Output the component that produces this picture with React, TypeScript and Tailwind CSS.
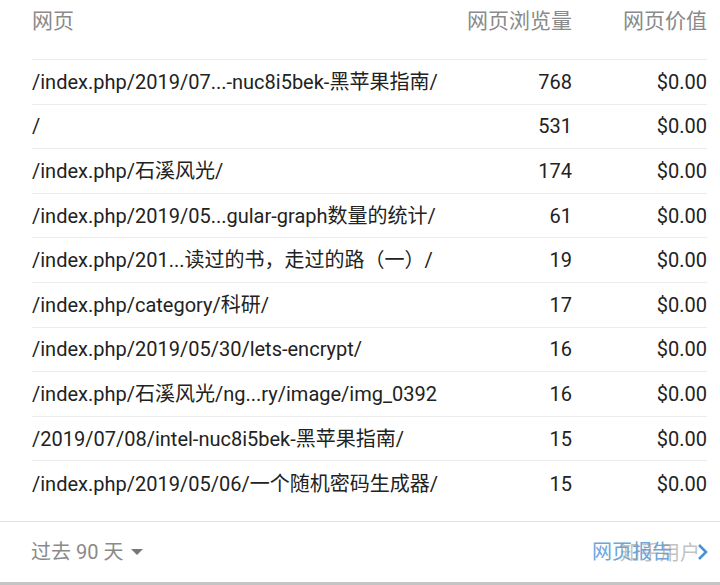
import React from "react";

type Row = {
  page: string;
  views: number;
  value: string;
};

const rows: Row[] = [
  { page: "/index.php/2019/07...-nuc8i5bek-黑苹果指南/", views: 768, value: "$0.00" },
  { page: "/", views: 531, value: "$0.00" },
  { page: "/index.php/石溪风光/", views: 174, value: "$0.00" },
  { page: "/index.php/2019/05...gular-graph数量的统计/", views: 61, value: "$0.00" },
  { page: "/index.php/201...读过的书，走过的路（一）/", views: 19, value: "$0.00" },
  { page: "/index.php/category/科研/", views: 17, value: "$0.00" },
  { page: "/index.php/2019/05/30/lets-encrypt/", views: 16, value: "$0.00" },
  { page: "/index.php/石溪风光/ng...ry/image/img_0392", views: 16, value: "$0.00" },
  { page: "/2019/07/08/intel-nuc8i5bek-黑苹果指南/", views: 15, value: "$0.00" },
  { page: "/index.php/2019/05/06/一个随机密码生成器/", views: 15, value: "$0.00" },
];

const font = "font-['Roboto','Noto_Sans_CJK_SC',sans-serif]";

const App: React.FC = () => (
  <div className={`w-[720px] h-[585px] bg-white flex flex-col ${font}`}>
    <div className="pl-[32px] pr-[13px]">
      {/* header */}
      <div className="h-[60px] flex items-start pt-[6px] text-[21px] text-[#8a8a8a] border-b border-[#ececec] whitespace-nowrap">
        <div className="flex-1 min-w-0">网页</div>
        <div className="w-[140px] text-right">网页浏览量</div>
        <div className="w-[135px] text-right">网页价值</div>
      </div>
      {rows.map((row, i) => (
        <div
          key={i}
          className={`h-[44.6px] flex items-center text-[20px] text-[#222] whitespace-nowrap ${
            i < rows.length - 1 ? "border-b border-[#ececec]" : ""
          }`}
        >
          <div className="flex-1 min-w-0">{row.page}</div>
          <div className="w-[100px] text-right">{row.views}</div>
          <div className="w-[135px] text-right">{row.value}</div>
        </div>
      ))}
    </div>
    <div className="mt-[15px] border-t border-[#e2e2e2] h-[61px] flex items-center justify-between pl-[31px] pr-[10px] relative">
      <div className="flex items-center gap-[8px] text-[20px] text-[#8a8a8a]">
        <span>过去 90 天</span>
        <span className="w-0 h-0 border-l-[6px] border-r-[6px] border-t-[6px] border-l-transparent border-r-transparent border-t-[#777]" />
      </div>
      <div className="flex items-center text-[20px] text-[#6aa6e0]">
        <span>网页报告</span>
        <svg width="14" height="20" viewBox="0 0 14 20" className="ml-[24px]">
          <path d="M3 3 L10 10 L3 17" fill="none" stroke="#4a90d9" strokeWidth="2.6" />
        </svg>
      </div>
      <span className="absolute right-[20px] top-[16px] text-[20px] text-[#9a9a9a] opacity-60">知乎用户</span>
    </div>
    <div className="flex-1 border-t-[3px] border-[#c4c4c4]" />
  </div>
);

export default App;
